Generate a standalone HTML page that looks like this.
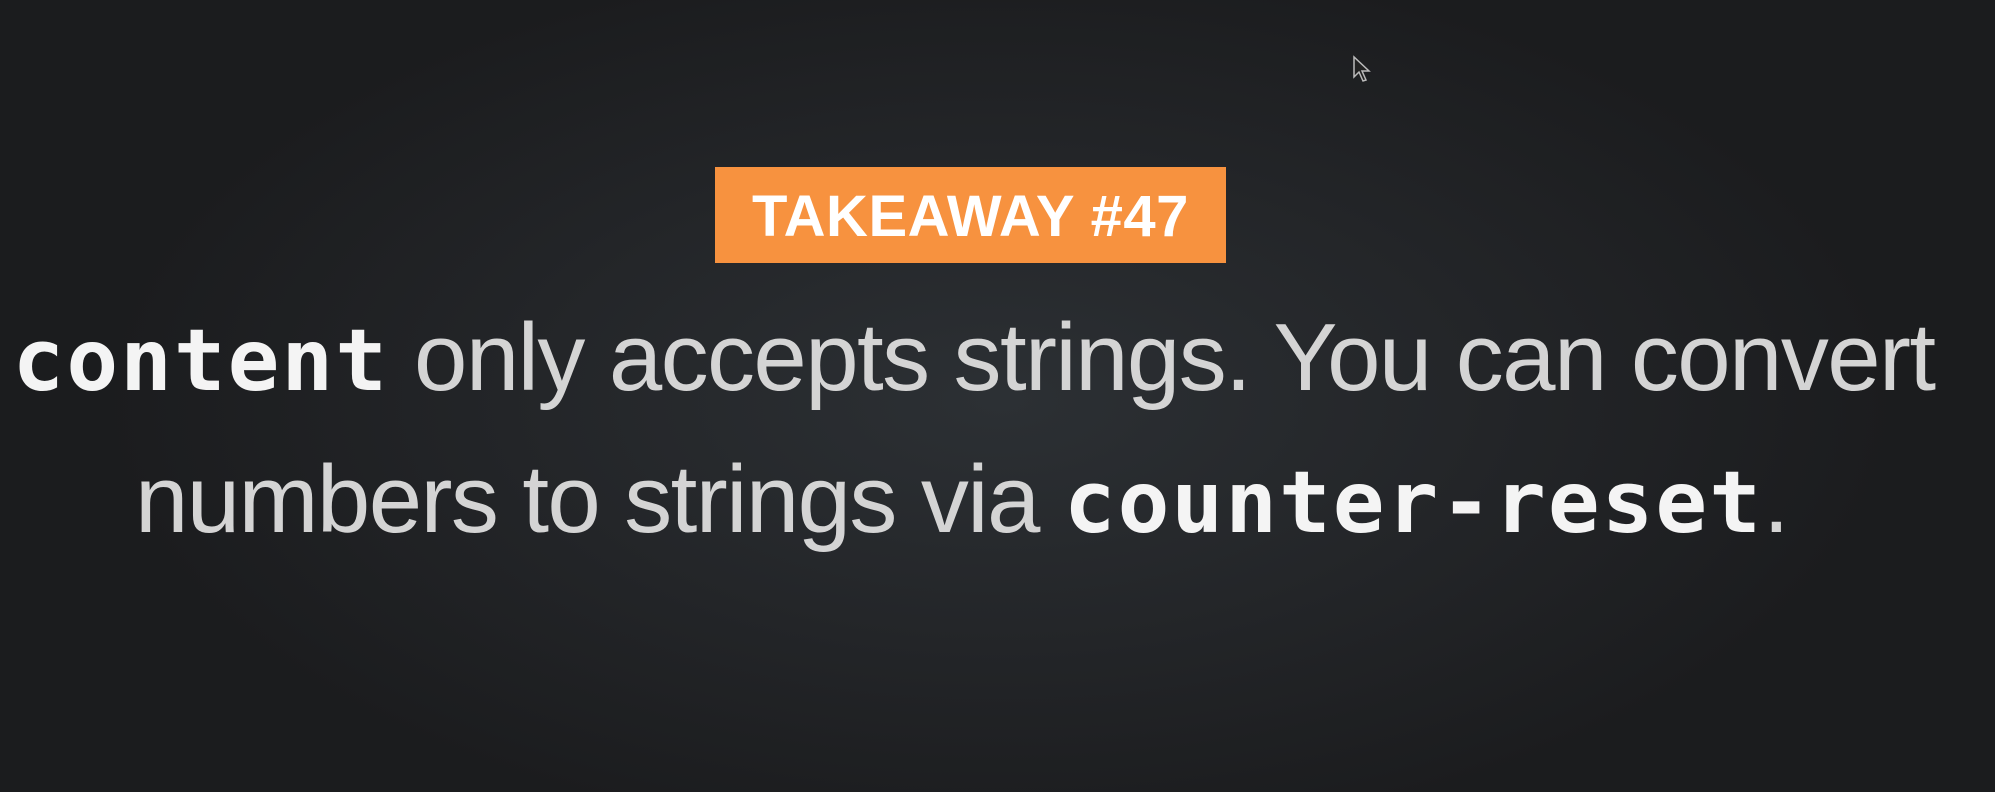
<!DOCTYPE html>
<html><head><meta charset="utf-8"><style>
html,body{margin:0;padding:0}
body{width:1995px;height:792px;overflow:hidden;position:relative;
background:radial-gradient(ellipse 900px 450px at 1000px 400px,#2c3034 0%,#232528 55%,#1b1c1e 100%);
font-family:"Liberation Sans",sans-serif;}
.tag{position:absolute;left:715px;top:167px;width:511px;height:96px;background:#f7923f;
color:#fff;font-weight:bold;font-size:58px;line-height:100px;text-align:center;letter-spacing:0.5px}
.line{position:absolute;left:0;width:1995px;text-align:center;color:#d4d4d4;font-size:96px;white-space:nowrap;letter-spacing:-1.6px}
.line code{font-family:"DejaVu Sans Mono",monospace;font-weight:bold;color:#f4f4f4;font-size:86px;letter-spacing:2px}
.cur{position:absolute;left:1352px;top:55px}
</style></head><body>
<svg class="cur" width="20" height="28" viewBox="0 0 20 28"><path d="M2 2 L2 22 L7 17 L11 26 L14 25 L10 16 L17 16 Z" fill="#222" stroke="#bbb" stroke-width="1.5"/></svg>
<div class="tag">TAKEAWAY #47</div>
<div class="line" style="top:303px;left:-24px"><code>content</code> only accepts strings. You can convert</div>
<div class="line" style="top:445px;left:-36px">numbers to strings via <code>counter-reset</code>.</div>
</body></html>
